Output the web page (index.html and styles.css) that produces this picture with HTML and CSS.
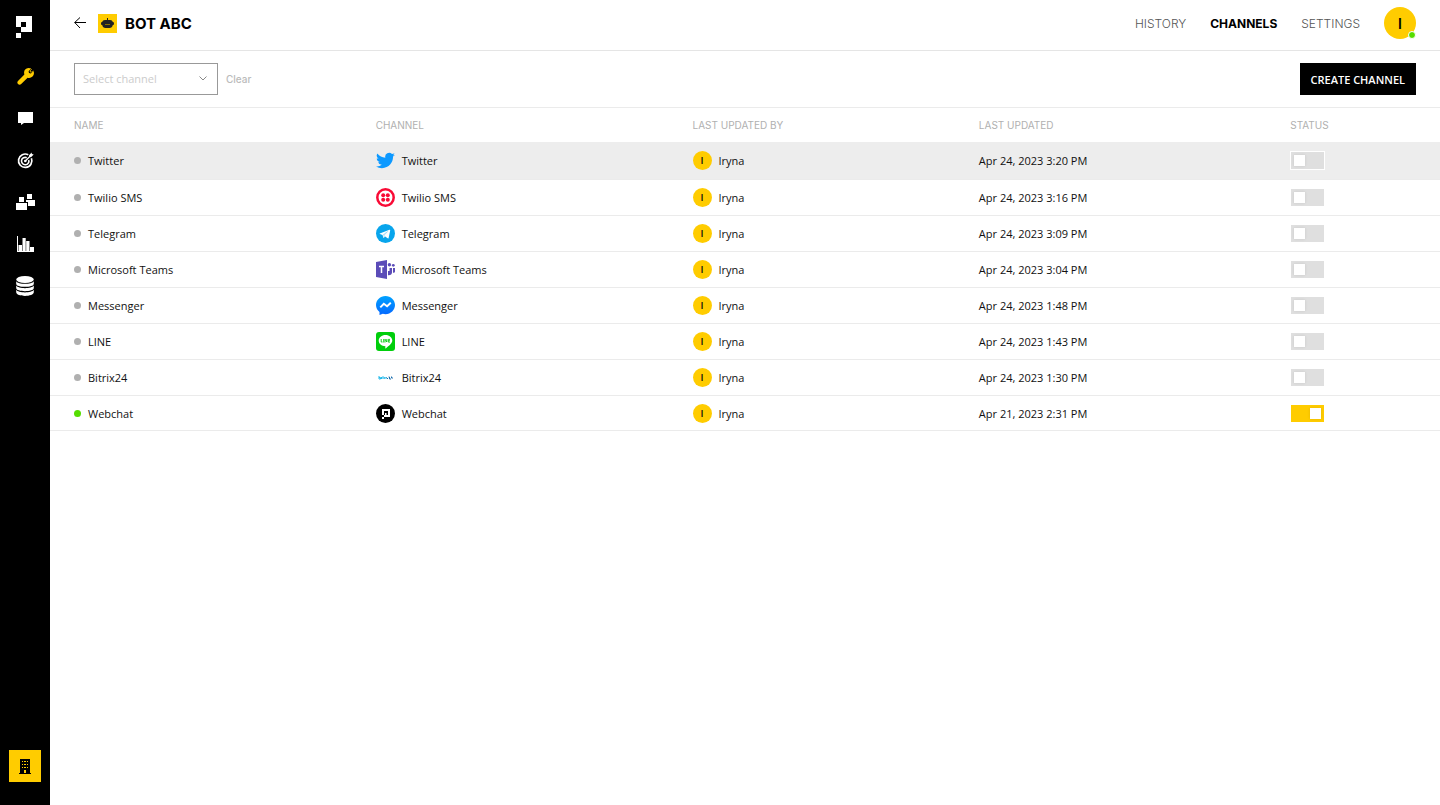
FILE: index.html
```html
<!DOCTYPE html>
<html lang="en">
<head>
  <meta charset="UTF-8">
  <meta name="viewport" content="width=device-width, initial-scale=1">
  <title>BOT ABC - Channels</title>
  <link rel="stylesheet" href="styles.css">
</head>
<body>

  <aside class="sidebar">
    <a class="logo" href="#" aria-label="Home">
      <svg width="16" height="22" viewBox="0 0 16 22"><path fill="#fff" fill-rule="evenodd" d="M0 0h16v16H5v6H0v-5h5v-6H0zM5 6v5h5V6z"/></svg>
    </a>
    <nav class="side-nav">
      <a class="active" href="#" aria-label="Build">
        <svg width="17" height="17" viewBox="0 0 17 17"><path fill="currentColor" d="M11.500 0c1.200 0 2 .2 2.700.6L11.600 3.200l.4 1.900 1.900.4 2.600-2.600c.9 2 .4 4.300-1 5.700-1.400 1.300-3.200 1.600-4.900 1.100l-6.400 6.400c-.9.900-2.300.9-3.200 0s-.9-2.300 0-3.200l6.400-6.400C6.300 3.200 8 .2 11.500 0z"/><path d="M14.700 1.200l-1.600 1.700.3 1.100 1.100.2 1.500-1.500" fill="none" stroke="currentColor" stroke-width=".8"/></svg>
      </a>
      <a href="#" aria-label="Chats">
        <svg width="15" height="13" viewBox="0 0 15 13"><path fill="currentColor" d="M0 0h15v11H6l-3 2v-2H0z"/></svg>
      </a>
      <a href="#" aria-label="Goals">
        <svg width="17" height="17" viewBox="0 0 17 17" fill="none" stroke="currentColor"><path stroke-width="1.700" d="M11.300 2.800A6.700 6.700 0 1 0 14.400 6.200"/><path stroke-width="1.600" d="M9.700 5.700a3.700 3.700 0 1 0 2 2.200"/><circle cx="8.300" cy="9" r="1.300" fill="currentColor" stroke="none"/><path d="M8.300 9l6-6" stroke-width="1.200"/><path fill="currentColor" stroke="none" d="M12 3.200L14.600.4l.3 1.700 1.800.4L14 5.200l-1.900-.1z"/></svg>
      </a>
      <a href="#" aria-label="Modules">
        <svg width="19" height="16" viewBox="0 0 19 16"><path fill="currentColor" d="M11 0h5v5h-5zM10 6h9v6h-7V8h-2zM3 3h5v5H3zM0 9h11v7H0z"/></svg>
      </a>
      <a href="#" aria-label="Analytics">
        <svg width="17" height="16" viewBox="0 0 17 16"><path fill="currentColor" d="M0 0h1v15h16v1H0zM1.500 9H5v6H1.500zM5.500 2h3.200v13H5.500zM9.200 5h3.300v10H9.200zM13 11h4v4h-4z"/></svg>
      </a>
      <a href="#" aria-label="Database">
        <svg width="18" height="20" viewBox="0 0 18 20"><ellipse cx="9" cy="3.500" rx="8.800" ry="3.500" fill="currentColor"/><path fill="currentColor" d="M.2 5.200C2 8.700 16 8.700 17.800 5.200v2.500c0 4.200-17.600 4.200-17.600 0zM.2 9.500C2 13 16 13 17.800 9.500V12c0 4.200-17.600 4.200-17.600 0zM.2 13.800C2 17.300 16 17.300 17.800 13.800v2.500c0 4.800-17.600 4.800-17.600 0z"/></svg>
      </a>
    </nav>
    <button class="company" type="button" aria-label="Company">
      <svg width="12" height="15" viewBox="0 0 12 15"><path fill="#000" fill-rule="evenodd" d="M1 0h10v14h1v1H0v-1h1zM3 2v1h1V2zm2 0v1h2V2zm3 0v1h1V2zM3 5v1h1V5zm2 0v1h2V5zm3 0v1h1V5zM3 8v1h1V8zm2 0v1h2V8zm3 0v1h1V8zM5 11v3h2v-3z"/></svg>
    </button>
  </aside>

  <div class="page">
    <header class="header">
      <a class="back" href="#" aria-label="Back">
        <svg width="12" height="12" viewBox="0 0 12 12" fill="none" stroke="#000"><path d="M6 .5L.7 5.500 6 11M.7 5.500H12"/></svg>
      </a>
      <span class="bot-icon">
        <svg width="13" height="11" viewBox="0 0 13 11"><path fill="#222" d="M6 0h1v2h2c1.500 0 2.500.8 2.800 2 .8 0 1.200.5 1.200 1.500S12.500 7 11.800 7c-.3 1.800-1.600 3-3.300 3h-4C2.800 10 1.500 8.800 1.200 7 .5 7 0 6.500 0 5.500S.4 4 1.200 4C1.500 2.800 2.500 2 4 2h2z"/><path d="M4 6.500h5" stroke="#8a7000"/></svg>
      </span>
      <h1>BOT ABC</h1>
      <nav class="tabs">
        <a href="#">HISTORY</a>
        <a class="active" href="#">CHANNELS</a>
        <a href="#">SETTINGS</a>
      </nav>
      <button class="profile" type="button">I<span class="online"></span></button>
    </header>

    <main>
      <div class="toolbar">
        <div class="filter">
          <select aria-label="Channel">
            <option>Select channel</option>
          </select>
          <svg width="8" height="5" viewBox="0 0 8 5" fill="none" stroke="#888"><path d="M.5.5L4 4 7.500.5"/></svg>
        </div>
        <button class="clear" type="button">Clear</button>
        <button class="create" type="button">CREATE CHANNEL</button>
      </div>

      <table class="channels">
        <colgroup>
          <col class="col-name">
          <col class="col-channel">
          <col class="col-author">
          <col class="col-date">
          <col>
        </colgroup>
        <thead>
          <tr>
            <th>NAME</th>
            <th>CHANNEL</th>
            <th>LAST UPDATED BY</th>
            <th>LAST UPDATED</th>
            <th>STATUS</th>
          </tr>
        </thead>
        <tbody>
          <tr class="selected">
            <td><div class="cell"><span class="dot"></span>Twitter</div></td>
            <td><div class="cell">
              <svg width="19" height="19" viewBox="0 0 24 24"><path fill="#0d99ff" d="M24 4.600a10 10 0 0 1-2.800.8 5 5 0 0 0 2.100-2.700 10 10 0 0 1-3.100 1.200 4.900 4.900 0 0 0-8.400 4.500A14 14 0 0 1 1.700 3.200a4.900 4.900 0 0 0 1.500 6.500 5 5 0 0 1-2.200-.6v.1a4.900 4.900 0 0 0 3.900 4.800 5 5 0 0 1-2.200.1 4.900 4.900 0 0 0 4.600 3.400A9.900 9.900 0 0 1 0 19.500a14 14 0 0 0 7.500 2.200c9 0 14-7.500 14-14V7A10 10 0 0 0 24 4.600z"/></svg>
              Twitter</div></td>
            <td><div class="cell"><span class="avatar">I</span>Iryna</div></td>
            <td>Apr 24, 2023 3:20 PM</td>
            <td><input class="toggle" type="checkbox" aria-label="Twitter status"></td>
          </tr>
          <tr>
            <td><div class="cell"><span class="dot"></span>Twilio SMS</div></td>
            <td><div class="cell">
              <svg width="19" height="19" viewBox="0 0 19 19"><circle cx="9.500" cy="9.500" r="8.200" fill="#fff" stroke="#f90a35" stroke-width="2.500"/><g fill="#f90a35"><circle cx="7.200" cy="7.200" r="2"/><circle cx="11.800" cy="7.200" r="2"/><circle cx="7.200" cy="11.800" r="2"/><circle cx="11.800" cy="11.800" r="2"/></g></svg>
              Twilio SMS</div></td>
            <td><div class="cell"><span class="avatar">I</span>Iryna</div></td>
            <td>Apr 24, 2023 3:16 PM</td>
            <td><input class="toggle" type="checkbox" aria-label="Twilio SMS status"></td>
          </tr>
          <tr>
            <td><div class="cell"><span class="dot"></span>Telegram</div></td>
            <td><div class="cell">
              <svg width="19" height="19" viewBox="0 0 19 19"><circle cx="9.500" cy="9.500" r="9.500" fill="#08a5ec"/><path fill="#fff" d="M3.800 9.600l9.600-3.900c.6-.2.900.1.800.7l-1.600 7.500c-.1.600-.5.700-1 .4l-2.500-1.800-1.200 1.200c-.3.300-.5.200-.6-.1l-.8-2.700-2.600-.8c-.5-.2-.5-.4-.1-.5z"/><path d="M7 11l4.500-3.400L8.100 11.200v1.800" fill="none" stroke="#9bd9f6" stroke-width=".8"/></svg>
              Telegram</div></td>
            <td><div class="cell"><span class="avatar">I</span>Iryna</div></td>
            <td>Apr 24, 2023 3:09 PM</td>
            <td><input class="toggle" type="checkbox" aria-label="Telegram status"></td>
          </tr>
          <tr>
            <td><div class="cell"><span class="dot"></span>Microsoft Teams</div></td>
            <td><div class="cell">
              <svg width="19" height="19" viewBox="0 0 19 19"><path fill="#5b4cb8" d="M0 2l11-2v19L0 17z"/><path d="M3 6.500h5M5.500 6v7" stroke="#fff" stroke-width="1.500"/><g fill="#5b4cb8"><circle cx="13.400" cy="4.800" r="1.700"/><circle cx="17.300" cy="5.300" r="1.400"/><path d="M12 11h1.500V8H16v4.500c0 1.800-1.500 3-4 2.700zM17 8h2v3.500c0 1-1 1.500-2 1.300z"/></g></svg>
              Microsoft Teams</div></td>
            <td><div class="cell"><span class="avatar">I</span>Iryna</div></td>
            <td>Apr 24, 2023 3:04 PM</td>
            <td><input class="toggle" type="checkbox" aria-label="Microsoft Teams status"></td>
          </tr>
          <tr>
            <td><div class="cell"><span class="dot"></span>Messenger</div></td>
            <td><div class="cell">
              <svg width="19" height="19" viewBox="0 0 19 19"><defs><linearGradient id="msg" x1="0" y1="0" x2="0" y2="1"><stop offset="0" stop-color="#00a2ff"/><stop offset="1" stop-color="#0568ff"/></linearGradient></defs><path fill="url(#msg)" d="M9.500 0C14.800 0 19 4 19 9.100s-4.200 9.100-9.500 9.100c-1 0-1.800-.1-2.700-.4L3.500 19v-3C1.400 14.400 0 12 0 9.100 0 4 4.200 0 9.500 0z"/><path fill="none" stroke="#fff" stroke-width="1.900" d="M4.300 11.400l3.500-3.600 3.300 2.500 3.700-3.500"/></svg>
              Messenger</div></td>
            <td><div class="cell"><span class="avatar">I</span>Iryna</div></td>
            <td>Apr 24, 2023 1:48 PM</td>
            <td><input class="toggle" type="checkbox" aria-label="Messenger status"></td>
          </tr>
          <tr>
            <td><div class="cell"><span class="dot"></span>LINE</div></td>
            <td><div class="cell">
              <svg width="19" height="19" viewBox="0 0 19 19"><rect width="19" height="19" rx="3" fill="#00ce0c"/><path fill="#fff" d="M9.500 3C13.300 3 16.300 5.500 16.300 8.600c0 2.700-3.300 5.400-6.300 7.600-.8.500-.8.200-.6-1.900C5.500 14.300 2.700 11.800 2.700 8.600 2.700 5.500 5.700 3 9.500 3z"/><path fill="none" stroke="#00ce0c" stroke-width=".9" d="M5.200 7v3h1.300M7.700 7v3.500M9 10.500V7.200l1.800 2.800V7M14 7.400h-1.700v2.700H14M12.300 8.700H14"/></svg>
              LINE</div></td>
            <td><div class="cell"><span class="avatar">I</span>Iryna</div></td>
            <td>Apr 24, 2023 1:43 PM</td>
            <td><input class="toggle" type="checkbox" aria-label="LINE status"></td>
          </tr>
          <tr>
            <td><div class="cell"><span class="dot"></span>Bitrix24</div></td>
            <td><div class="cell">
              <svg width="19" height="19" viewBox="0 0 19 19" fill="none"><path stroke="#21b9ea" d="M3 8v3h1.500V9.500H3M5.500 9v2M6.500 9h1M7 8.500v2.500M8.300 11V9.500h1M10 9v2"/><path stroke="#1c6fae" d="M10.500 9.500l1.500 1.500M12.500 9h1v2h1.500M15.500 8.500v1.500h1.500"/></svg>
              Bitrix24</div></td>
            <td><div class="cell"><span class="avatar">I</span>Iryna</div></td>
            <td>Apr 24, 2023 1:30 PM</td>
            <td><input class="toggle" type="checkbox" aria-label="Bitrix24 status"></td>
          </tr>
          <tr>
            <td><div class="cell"><span class="dot on"></span>Webchat</div></td>
            <td><div class="cell">
              <svg width="19" height="19" viewBox="0 0 19 19"><circle cx="9.500" cy="9.500" r="9.500" fill="#000"/><path fill="#fff" fill-rule="evenodd" d="M6 5h8v8H8v2H6v-2h2v-2H6zM8 7v4h1V9h1.500v2H12V7z"/></svg>
              Webchat</div></td>
            <td><div class="cell"><span class="avatar">I</span>Iryna</div></td>
            <td>Apr 21, 2023 2:31 PM</td>
            <td><input class="toggle" type="checkbox" aria-label="Webchat status" checked></td>
          </tr>
        </tbody>
      </table>
    </main>
  </div>

</body>
</html>
```

FILE: styles.css
```css
* {
  box-sizing: border-box;
}
body {
  display: flex;
  min-height: 100vh;
  margin: 0;
  font-family: "Open Sans", sans-serif;
  font-size: 11px;
  color: #111;
  background-color: #fff;
}
a {
  color: inherit;
  text-decoration: none;
}
button {
  border: none;
  padding: 0;
  cursor: pointer;
}
svg {
  display: block;
  flex: none;
}

/* sidebar */
.sidebar {
  display: flex;
  flex-direction: column;
  align-items: center;
  flex: none;
  width: 50px;
  padding: 16px 0 23px;
  background-color: #000;
  color: #fff;
}
.logo {
  height: 39px;
  margin-right: 2px;
}
.side-nav a {
  display: flex;
  align-items: center;
  justify-content: center;
  width: 51px;
  height: 42px;
}
.side-nav .active {
  color: #ffcc00;
}
.company {
  display: flex;
  align-items: center;
  justify-content: center;
  width: 32px;
  height: 32px;
  margin-top: auto;
  background-color: #ffcc00;
}

/* header */
.page {
  flex: 1;
}
.header {
  display: flex;
  align-items: center;
  padding: 7px 24px 11px;
  border-bottom: 1px solid #e5e5e5;
  font-family: Inter, sans-serif;
}
.bot-icon {
  display: flex;
  align-items: center;
  justify-content: center;
  width: 19px;
  height: 19px;
  margin: 0 8px 0 12px;
  background-color: #ffcc00;
}
h1 {
  margin: 0;
  font-size: 15px;
  font-weight: 700;
  color: #000;
}
.tabs {
  display: flex;
  gap: 24px;
  margin: 0 24px 0 auto;
  font-size: 12px;
  font-weight: 300;
  color: #555;
}
.tabs .active {
  font-weight: 700;
  color: #000;
}
.profile {
  position: relative;
  width: 32px;
  height: 32px;
  border-radius: 50%;
  background-color: #ffcc00;
  font-family: Inter, sans-serif;
  font-size: 14px;
  font-weight: 600;
  color: #000;
}
.online {
  position: absolute;
  right: 0;
  bottom: 0;
  width: 8px;
  height: 8px;
  border: 1px solid #fff;
  border-radius: 50%;
  background-color: #55dd00;
}

/* filter bar */
.toolbar {
  display: flex;
  align-items: center;
  padding: 12px 24px;
  border-bottom: 1px solid #ebebeb;
}
.filter {
  position: relative;
}
.filter select {
  appearance: none;
  display: block;
  width: 144px;
  height: 32px;
  padding: 0 24px 2px 8px;
  border: 1px solid #999;
  border-radius: 0;
  background-color: #fff;
  font-family: inherit;
  font-size: 11px;
  color: #ccc;
}
.filter svg {
  position: absolute;
  top: 13px;
  right: 11px;
  pointer-events: none;
}
.clear {
  margin-left: 8px;
  background: none;
  font-family: Inter, sans-serif;
  font-size: 10px;
  font-weight: 500;
  color: #bbb;
}
.create {
  height: 32px;
  margin-left: auto;
  padding: 0 11px;
  background-color: #000;
  font-family: "Open Sans", sans-serif;
  font-size: 11px;
  font-weight: 600;
  color: #fff;
}

/* channels table */
.channels {
  width: 100%;
  table-layout: fixed;
  border-collapse: separate;
  border-spacing: 0;
}
.col-name {
  width: 21.7%;
}
.col-channel {
  width: 22.8%;
}
.col-author {
  width: 20.6%;
}
.col-date {
  width: 22.4%;
}
th {
  height: 34px;
  padding: 0 0 0 24px;
  font-family: Inter, sans-serif;
  font-size: 10px;
  font-weight: 400;
  text-align: left;
  color: #b0b0b0;
}
td {
  height: 36px;
  padding: 0 0 0 24px;
  border-bottom: 1px solid #ebebeb;
}
.selected td {
  height: 38px;
  background-color: #ededed;
}
tr:last-child td {
  height: 35px;
}
.cell {
  display: flex;
  align-items: center;
  gap: 7px;
}
.dot {
  width: 7px;
  height: 7px;
  border-radius: 50%;
  background-color: #b0b0b0;
}
.dot.on {
  background-color: #55dd00;
}
.avatar {
  width: 19px;
  height: 19px;
  border-radius: 50%;
  background-color: #ffcc00;
  font-family: Inter, sans-serif;
  font-size: 9px;
  font-weight: 600;
  line-height: 19px;
  text-align: center;
}
.toggle {
  appearance: none;
  display: flex;
  align-items: center;
  width: 33px;
  height: 17px;
  margin: 0 0 0 1px;
  padding: 0 3px;
  background-color: #dfdfdf;
  cursor: pointer;
}
.toggle::before {
  content: "";
  width: 11px;
  height: 11px;
  background-color: #fff;
  box-shadow: 0 0 3px rgba(0, 0, 0, 0.1);
}
.toggle:checked {
  justify-content: flex-end;
  background-color: #ffcc00;
}
.selected .toggle {
  outline: 1px solid #fff;
}
```
